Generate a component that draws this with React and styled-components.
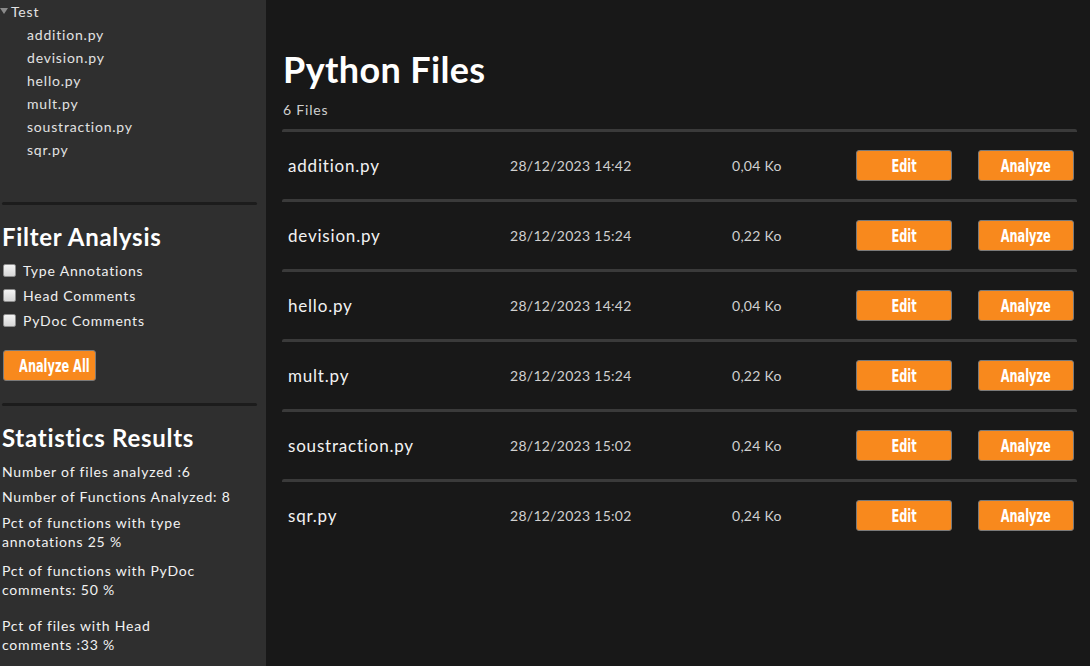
import React from "react";
import styled, { createGlobalStyle } from "styled-components";

const Global = createGlobalStyle`
  html, body, #root {
    margin: 0;
    height: 100%;
  }
  body {
    background: #181818;
    font-family: Lato, "Open Sans", sans-serif;
    letter-spacing: 0.05em;
    color: #eeeeee;
  }
`;

const Page = styled.div`
  display: flex;
  min-height: 100vh;
`;

const Sidebar = styled.aside`
  width: 266px;
  flex-shrink: 0;
  background: #2f2f2f;
  display: flex;
  flex-direction: column;
`;

const Tree = styled.ul`
  list-style: none;
  margin: 0;
  padding: 0;
  font-size: 14px;
  line-height: 23px;
  color: #e2e2e2;
`;

const Folder = styled.li`
  display: flex;
  align-items: center;
  gap: 3px;
  &::before {
    content: "";
    width: 0;
    height: 0;
    border-left: 4px solid transparent;
    border-right: 4px solid transparent;
    border-top: 6px solid #8a8a8a;
    margin-top: -1px;
  }
`;

const Leaf = styled.li`
  padding-left: 27px;
`;

const Divider = styled.hr`
  border: none;
  height: 3px;
  border-radius: 2px;
  background: ${(p) => p.$color};
  margin: ${(p) => p.$margin};
`;

const SideHeading = styled.h2`
  margin: 0;
  padding-left: 2px;
  font-size: 24px;
  line-height: 28px;
  font-weight: 700;
  letter-spacing: 0.03em;
  color: #ffffff;
`;

const Checks = styled.div`
  display: flex;
  flex-direction: column;
  margin-top: 7px;
  padding-left: 3px;
`;

const CheckRow = styled.label`
  display: flex;
  align-items: center;
  gap: 7px;
  height: 25px;
  font-size: 14px;
  color: #f0f0f0;
  input {
    appearance: none;
    margin: 0;
    width: 13px;
    height: 13px;
    border: 1px solid #8c8c8c;
    border-radius: 2px;
    background: linear-gradient(#f4f4f4, #d6d6d6);
  }
`;

const OrangeButton = styled.button`
  width: ${(p) => p.$width || "96px"};
  height: 31px;
  background: #f8891d;
  border: 1px solid #7a7a7a;
  border-radius: 3px;
  color: #ffffff;
  font-family: "DejaVu Sans Condensed", "Liberation Sans Narrow", sans-serif;
  font-weight: 700;
  font-size: 18px;
  letter-spacing: 0;
  white-space: nowrap;
  overflow: hidden;
  padding: 0;
  cursor: pointer;
  span {
    display: inline-block;
    transform: scaleX(0.7);
  }
`;

const SideButtonWrap = styled.div`
  padding-left: 3px;
  margin-top: 17px;
`;

const Stats = styled.div`
  display: flex;
  flex-direction: column;
  padding-left: 2px;
  margin-top: 10px;
`;

const Stat = styled.p`
  margin: ${(p) => p.$space || 0}px 0 0;
  max-width: ${(p) => (p.$narrow ? "205px" : "none")};
  font-size: 14px;
  line-height: 19px;
  color: #f2f2f2;
`;

const Main = styled.main`
  flex: 1;
  padding: 47px 13px 0 16px;
`;

const Title = styled.h1`
  margin: 0 0 0 1px;
  font-size: 36px;
  line-height: 44px;
  font-weight: 700;
  letter-spacing: 0.01em;
  color: #ffffff;
`;

const Count = styled.div`
  margin: 9px 0 10px 1px;
  font-size: 14px;
  line-height: 19px;
  color: #cfcfcf;
`;

const Row = styled.div`
  display: grid;
  grid-template-columns: 222px 222px 124px 96px 96px;
  align-items: center;
  height: 67px;
  padding-left: 6px;
  border-top: 3px solid #3a3a3a;
  border-radius: 2px;
  & > button:last-child {
    margin-left: 26px;
  }
`;

const FileName = styled.span`
  font-size: 17px;
  color: #f2f2f2;
`;

const Meta = styled.span`
  font-size: 14px;
  letter-spacing: 0.02em;
  color: #d0d0d0;
`;

const files = [
  { name: "addition.py", date: "28/12/2023 14:42", size: "0,04 Ko" },
  { name: "devision.py", date: "28/12/2023 15:24", size: "0,22 Ko" },
  { name: "hello.py", date: "28/12/2023 14:42", size: "0,04 Ko" },
  { name: "mult.py", date: "28/12/2023 15:24", size: "0,22 Ko" },
  { name: "soustraction.py", date: "28/12/2023 15:02", size: "0,24 Ko" },
  { name: "sqr.py", date: "28/12/2023 15:02", size: "0,24 Ko" },
];

export default function App() {
  return (
    <Page>
      <Global />
      <Sidebar>
        <Tree>
          <Folder>Test</Folder>
          {files.map((f) => (
            <Leaf key={f.name}>{f.name}</Leaf>
          ))}
        </Tree>
        <Divider $color="#1c1c1c" $margin="41px 9px 18px 2px" />
        <SideHeading>Filter Analysis</SideHeading>
        <Checks>
          <CheckRow>
            <input type="checkbox" /> Type Annotations
          </CheckRow>
          <CheckRow>
            <input type="checkbox" /> Head Comments
          </CheckRow>
          <CheckRow>
            <input type="checkbox" /> PyDoc Comments
          </CheckRow>
        </Checks>
        <SideButtonWrap>
          <OrangeButton $width="93px">
            <span>Analyze All</span>
          </OrangeButton>
        </SideButtonWrap>
        <Divider $color="#1c1c1c" $margin="22px 9px 18px 2px" />
        <SideHeading>Statistics Results</SideHeading>
        <Stats>
          <Stat>Number of files analyzed :6</Stat>
          <Stat $space={6}>Number of Functions Analyzed: 8</Stat>
          <Stat $space={7} $narrow>
            Pct of functions with type annotations 25 %
          </Stat>
          <Stat $space={10} $narrow>
            Pct of functions with PyDoc comments: 50 %
          </Stat>
          <Stat $space={17} $narrow>
            Pct of files with Head comments :33 %
          </Stat>
        </Stats>
      </Sidebar>
      <Main>
        <Title>Python Files</Title>
        <Count>6 Files</Count>
        {files.map((f) => (
          <Row key={f.name}>
            <FileName>{f.name}</FileName>
            <Meta>{f.date}</Meta>
            <Meta>{f.size}</Meta>
            <OrangeButton>
              <span>Edit</span>
            </OrangeButton>
            <OrangeButton>
              <span>Analyze</span>
            </OrangeButton>
          </Row>
        ))}
      </Main>
    </Page>
  );
}
